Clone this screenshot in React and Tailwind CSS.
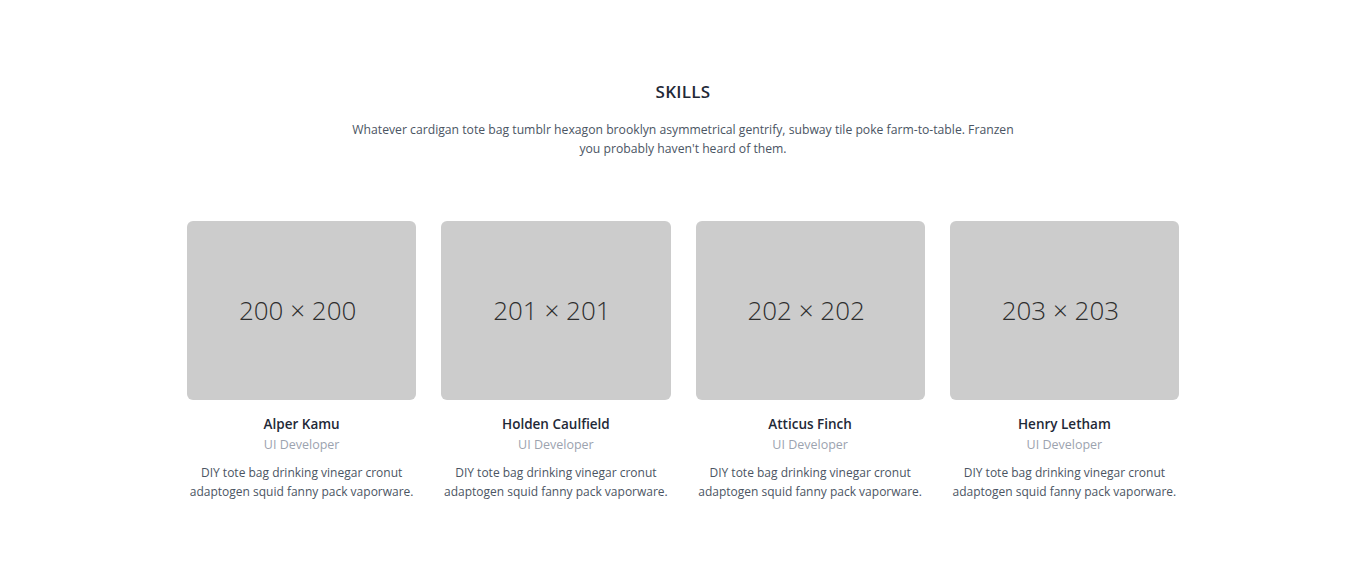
import React from 'react';

const people = [
  { size: '200 × 200', name: 'Alper Kamu' },
  { size: '201 × 201', name: 'Holden Caulfield' },
  { size: '202 × 202', name: 'Atticus Finch' },
  { size: '203 × 203', name: 'Henry Letham' },
];

export default function App() {
  return (
    <div className="min-h-[561px] bg-white font-['Open_Sans',sans-serif] text-gray-600">
      <section className="pt-[80px] pb-[60px]">
        <div className="flex flex-col items-center text-center">
          <h1 className="text-[17px] font-semibold tracking-[0.3px] text-[#1f2937] leading-[24px]">SKILLS</h1>
          <p className="mt-[16px] max-w-[672px] text-[12.2px] leading-[19px] text-[#4b5563]">
            Whatever cardigan tote bag tumblr hexagon brooklyn asymmetrical gentrify, subway tile poke farm-to-table. Franzen you probably haven't heard of them.
          </p>
        </div>

        <div className="mx-auto mt-[63px] grid w-[992px] grid-cols-4 gap-x-[25px]">
          {people.map((p) => (
            <div key={p.name} className="flex flex-col items-center text-center">
              <div className="flex h-[179px] w-full items-center justify-center rounded-[6px] bg-[#cccccc] pr-[8px]">
                <span className="text-[26px] font-light text-[#2e2e2e]">{p.size}</span>
              </div>
              <h2 className="mt-[14px] text-[13.5px] font-semibold leading-[20px] text-[#1f2937]">{p.name}</h2>
              <p className="mt-[1px] text-[12.5px] leading-[20px] text-[#9ca3af]">UI Developer</p>
              <p className="mt-[8px] text-[12px] leading-[19px] text-[#4b5563]">
                DIY tote bag drinking vinegar cronut adaptogen squid fanny pack vaporware.
              </p>
            </div>
          ))}
        </div>
      </section>
    </div>
  );
}
